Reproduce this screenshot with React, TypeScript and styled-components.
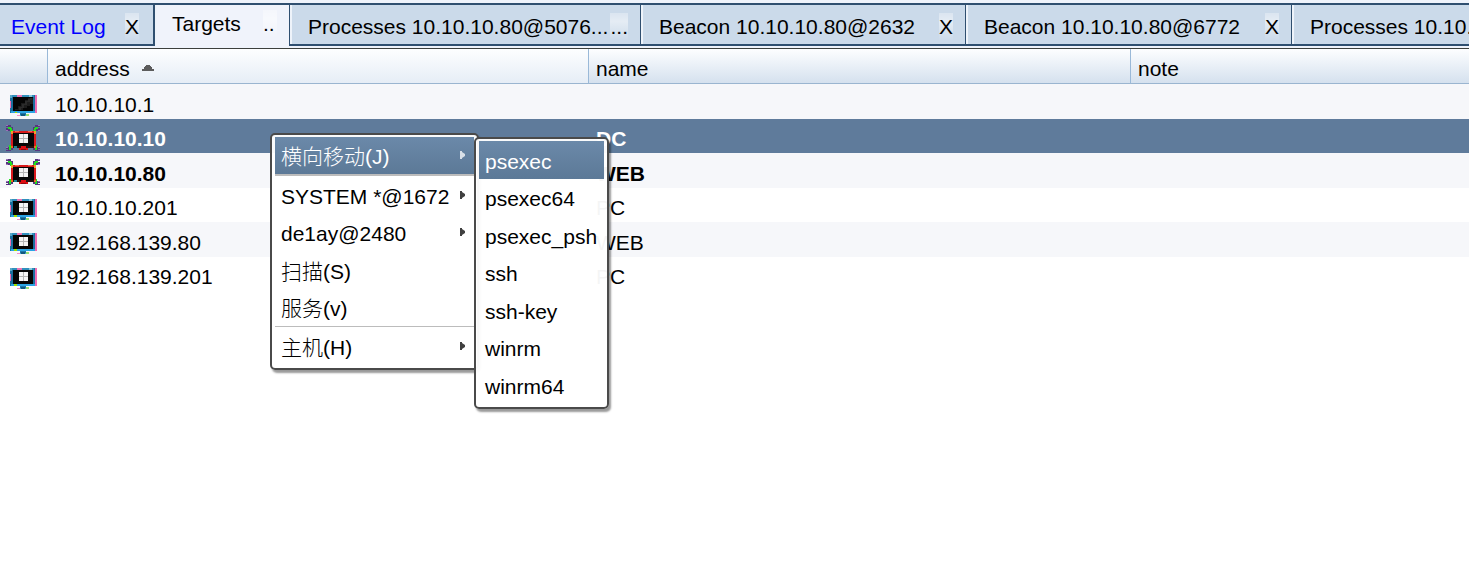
import React from 'react';
import styled, { createGlobalStyle, css } from 'styled-components';

const GlobalStyle = createGlobalStyle`
  *, *::before, *::after { box-sizing: border-box; }
  body {
    margin: 0;
    background: #fff;
    color: #000;
    font: 21px/24px "Liberation Sans", "Noto Sans CJK SC", sans-serif;
  }
  button {
    margin: 0;
    padding: 0;
    border: 0;
    background: none;
    color: inherit;
    font: inherit;
    text-align: left;
  }
`;

const Page = styled.div`
  position: relative;
  min-height: 100vh;
  overflow: hidden;
`;

/* ---------- tabs ---------- */

const TabBar = styled.nav`
  display: flex;
  padding: 3px 0 2px;
  background: #eff3fb;
  border-bottom: 1px solid #3c3f3c;
  overflow: hidden;
`;

const Tab = styled.div<{ $width: number; $active?: boolean; $first?: boolean }>`
  flex: none;
  display: flex;
  align-items: center;
  width: ${(p) => p.$width}px;
  height: 43px;
  padding: 4px 12px 0 18px;
  border: solid #2f4f70;
  border-width: 2px 0 2px 1px;
  background: #cbdaea;
  box-shadow: inset 2px 0 #eef3fa;
  ${(p) =>
    p.$first &&
    css`
      padding: 4px 14px 0 11px;
      border-width: 2px 2px 2px 0;
      box-shadow: none;
    `}
  ${(p) =>
    p.$active &&
    css`
      padding: 0 12px 4px 17px;
      border-width: 2px 0 0;
      background: #f0f3fb;
    `}
`;

const TabLabel = styled.button<{ $alert?: boolean }>`
  flex: 1;
  min-width: 0;
  white-space: nowrap;
  color: ${(p) => (p.$alert ? '#0000ff' : '#000')};
`;

const CloseButton = styled.button`
  flex: none;
  min-width: 14px;
  height: 28px;
  white-space: nowrap;
  background: linear-gradient(rgba(255, 255, 255, 0.3), rgba(255, 255, 255, 0.5) 30%, rgba(255, 255, 255, 0));
`;

/* ---------- table ---------- */

const Table = styled.table`
  width: 100%;
  table-layout: fixed;
  border-collapse: separate;
  border-spacing: 0;
`;

const Col = styled.col<{ $width?: number }>`
  width: ${(p) => (p.$width ? `${p.$width}px` : 'auto')};
`;

const HeadCell = styled.th<{ $sorted?: boolean }>`
  height: 35px;
  padding: 6px 7px 0;
  border-left: 1px solid #9ab9d8;
  border-bottom: 1px solid #9ab5d0;
  background: linear-gradient(#fdfeff, ${(p) => (p.$sorted ? '#e6edf6' : '#d5e1ee')});
  font-weight: normal;
  text-align: left;
  white-space: nowrap;
  &:first-child { border-left: 0; }
`;

const SortIcon = styled.svg`
  display: inline-block;
  width: 12px;
  height: 6px;
  margin: 0 0 4px 12px;
  vertical-align: middle;
`;

const Row = styled.tr<{ $selected?: boolean; $bold?: boolean }>`
  height: 34px;
  font-weight: ${(p) => (p.$bold ? 'bold' : 'normal')};
  &:nth-child(odd) { height: 35px; background: #f6f7fa; }
  ${(p) =>
    p.$selected &&
    css`
      background: #5f7b9b;
      color: #fff;
    `}
`;

const Cell = styled.td`
  padding: 6px 8px 0;
  white-space: nowrap;
`;

const IconCell = styled.td`
  padding: 0 0 0 6px;
  vertical-align: top;
`;

const HostSvg = styled.svg`
  display: block;
  width: 34px;
  height: 34px;
`;

/* ---------- menus ---------- */

const Menu = styled.div<{ $sub?: boolean }>`
  position: absolute;
  top: ${(p) => (p.$sub ? 137 : 133)}px;
  left: ${(p) => (p.$sub ? 474 : 270)}px;
  width: ${(p) => (p.$sub ? 135 : 209)}px;
  padding: 2px 3px 3px;
  border: 2px solid #4a4a4a;
  border-radius: 5px;
  background: rgba(255, 255, 255, 0.96);
  box-shadow: 2px 3px 2px rgba(0, 0, 0, 0.4);
`;

const MenuItem = styled.button<{ $current?: boolean; $sub?: boolean }>`
  display: flex;
  align-items: center;
  justify-content: space-between;
  width: 100%;
  height: 37px;
  padding: 3px 9px 0 6px;
  font-weight: 300;
  white-space: nowrap;
  &:nth-of-type(${(p) => (p.$sub ? 'odd' : 'even')}) { height: 38px; }
  ${(p) =>
    p.$current &&
    css`
      background: linear-gradient(#6b89a9, #5c7997);
      color: #fff;
    `}
`;

const Separator = styled.hr<{ $thick?: boolean }>`
  height: ${(p) => (p.$thick ? 2 : 1)}px;
  margin: 0;
  border: 0;
  background: #bcbcbc;
`;

const ArrowSvg = styled.svg`
  flex: none;
  width: 5px;
  height: 8px;
  margin-bottom: 4px;
`;

const WindowsLogo = () => (
  <>
    <rect x="13" y="15" width="9" height="9" fill="#b4b4b4" />
    <path d="M13 15h4v4h-4zM18 15h4v4h-4zM13 20h4v4h-4zM18 20h4v4h-4z" fill="#f4f4f4" />
  </>
);

const Monitor = ({ windows }: { windows: boolean }) => (
  <HostSvg viewBox="0 0 34 34" shapeRendering="crispEdges" aria-hidden="true">
    <rect x="4" y="11" width="25" height="18" fill="#1b6f9f" />
    <path d="M5 11h23v2H5z" fill="#3190bd" />
    <path d="M4 11h2v3H4z" fill="#5aa8c8" />
    <path d="M5 27h24v2H5z" fill="#2aa4e4" />
    <path d="M29 11h2v18h-2zM4 17h1v7H4z" fill="#f06eb4" />
    <path d="M11 11h5v2h-5z" fill="#e874b4" />
    <path d="M23 11h3v2h-3z" fill="#86c8de" />
    <rect x="7" y="13" width="20" height="14" fill="#050505" />
    {windows ? (
      <>
        <WindowsLogo />
        <path d="M8 27h3v2H8z" fill="#9fe000" />
      </>
    ) : (
      <>
        <path d="M22 14h5v6h-3v2h-3v2h-4v2h-8v-1h3v-3h3v-3h4v-3h3z" fill="#1c1c1c" />
        <path d="M24 14h2v2h-2v2h-3v3h-3v3h-3v2h-2v-3h3v-3h3v-3h3v-2h2z" fill="#2b2b2b" />
        <path d="M9 28h2v1H9z" fill="#9fe000" />
      </>
    )}
    <rect x="14" y="29" width="6" height="2" fill="#1b78a9" />
    <rect x="12" y="31" width="10" height="1" fill="#46a9cf" />
    <path d="M11 31h3v1h-3z" fill="#f58fc5" />
    <path d="M20 30h3v2h-3z" fill="#98df72" />
    <path d="M15 30h4v2h-4z" fill="#12587f" />
  </HostSvg>
);

const CompromisedMonitor = () => (
  <HostSvg viewBox="0 0 34 34" shapeRendering="crispEdges" aria-hidden="true">
    <path
      d="M0 6h5v2h2v5H4v-1H2v-1H0V9h2V8H0zM34 6h-5v2h-2v5h3v-1h2v-1h2V9h-2V8h2zM0 32h5v-1h2v-5H4v2H2v1H0v1h2v1H0zM34 32h-5v-1h-2v-5h3v2h2v1h2v1h-2v1h2z"
      fill="#56367e"
    />
    <path
      d="M2 8h3v1h1v2h1v4H5v-2H4v-3H2zM32 8h-3v1h-1v2h-1v4h2v-2h1v-3h2zM3 26h2v1h2v2H5v2H3zM31 26h-2v1h-2v2h2v2h2z"
      fill="#20e020"
    />
    <path d="M0 6h2v1H0zM32 6h2v1h-2zM0 11h2v1H0zM32 11h2v1h-2zM0 28h2v1H0zM32 28h2v1h-2z" fill="#9b70b8" />
    <rect x="5" y="12" width="25" height="17" fill="#d91a1c" />
    <path d="M9 12h4v1H9zM22 12h4v1h-4z" fill="#f36a48" />
    <path d="M5 12h2v3H5zM28 12h2v3h-2z" fill="#f0a028" />
    <rect x="7" y="14" width="21" height="13" fill="#070707" />
    <path d="M7 27h21v2H7z" fill="#241010" />
    <path d="M8 27h3v2H8z" fill="#158b91" />
    <path d="M5 27h2v2H5zM28 27h2v2h-2z" fill="#f06a20" />
    <WindowsLogo />
    <path d="M15 27h5v2h2v2h-9v-2h2z" fill="#e00c12" />
    <path d="M15 30h5v1h-5z" fill="#8e0910" />
  </HostSvg>
);

const Arrow = () => (
  <ArrowSvg viewBox="0 0 5 8" aria-hidden="true">
    <path d="M0 0h2v1l3 2v2L2 7v1H0z" fill="currentColor" fillOpacity="0.75" />
  </ArrowSvg>
);

const tabs = [
  { label: 'Event Log', close: 'X', width: 155, alert: true, first: true },
  { label: 'Targets', close: '..', width: 134, active: true },
  { label: 'Processes 10.10.10.80@5076...', close: '...', width: 351 },
  { label: 'Beacon 10.10.10.80@2632', close: 'X', width: 325 },
  { label: 'Beacon 10.10.10.80@6772', close: 'X', width: 326 },
  { label: 'Processes 10.10.10.80@5076...', close: '...', width: 351 },
];

type Host = {
  address: string;
  name: string;
  kind: 'unknown' | 'windows' | 'compromised';
  selected?: boolean;
};

const hosts: Host[] = [
  { address: '10.10.10.1', name: '', kind: 'unknown' },
  { address: '10.10.10.10', name: 'DC', kind: 'compromised', selected: true },
  { address: '10.10.10.80', name: 'WEB', kind: 'compromised' },
  { address: '10.10.10.201', name: 'PC', kind: 'windows' },
  { address: '192.168.139.80', name: 'WEB', kind: 'windows' },
  { address: '192.168.139.201', name: 'PC', kind: 'windows' },
];

const jumpMethods = ['psexec', 'psexec64', 'psexec_psh', 'ssh', 'ssh-key', 'winrm', 'winrm64'];

export default function App() {
  return (
    <Page>
      <GlobalStyle />
      <TabBar>
        {tabs.map((tab, i) => (
          <Tab key={i} $width={tab.width} $active={tab.active} $first={tab.first}>
            <TabLabel $alert={tab.alert}>{tab.label}</TabLabel>
            <CloseButton aria-label={`Close ${tab.label}`}>{tab.close}</CloseButton>
          </Tab>
        ))}
      </TabBar>

      <Table>
        <colgroup>
          <Col $width={47} />
          <Col $width={541} />
          <Col $width={542} />
          <Col />
        </colgroup>
        <thead>
          <tr>
            <HeadCell aria-label="status" />
            <HeadCell $sorted aria-sort="ascending">
              address
              <SortIcon viewBox="0 0 12 6" aria-hidden="true">
                <path d="M4 0h4v1h1v1h1v2h2v2H0V4h2V2h1V1h1z" fill="#5c5c5c" />
              </SortIcon>
            </HeadCell>
            <HeadCell>name</HeadCell>
            <HeadCell>note</HeadCell>
          </tr>
        </thead>
        <tbody>
          {hosts.map((host) => (
            <Row key={host.address} $selected={host.selected} $bold={host.kind === 'compromised'}>
              <IconCell>
                {host.kind === 'compromised' ? <CompromisedMonitor /> : <Monitor windows={host.kind === 'windows'} />}
              </IconCell>
              <Cell>{host.address}</Cell>
              <Cell>{host.name}</Cell>
              <Cell />
            </Row>
          ))}
        </tbody>
      </Table>

      <Menu role="menu">
        <MenuItem role="menuitem" $current>横向移动(J)<Arrow /></MenuItem>
        <Separator $thick />
        <MenuItem role="menuitem">SYSTEM *@1672<Arrow /></MenuItem>
        <MenuItem role="menuitem">de1ay@2480<Arrow /></MenuItem>
        <MenuItem role="menuitem">扫描(S)</MenuItem>
        <MenuItem role="menuitem">服务(v)</MenuItem>
        <Separator />
        <MenuItem role="menuitem">主机(H)<Arrow /></MenuItem>
      </Menu>

      <Menu role="menu" $sub>
        {jumpMethods.map((method, i) => (
          <MenuItem key={method} role="menuitem" $sub $current={i === 0}>
            {method}
          </MenuItem>
        ))}
      </Menu>
    </Page>
  );
}
